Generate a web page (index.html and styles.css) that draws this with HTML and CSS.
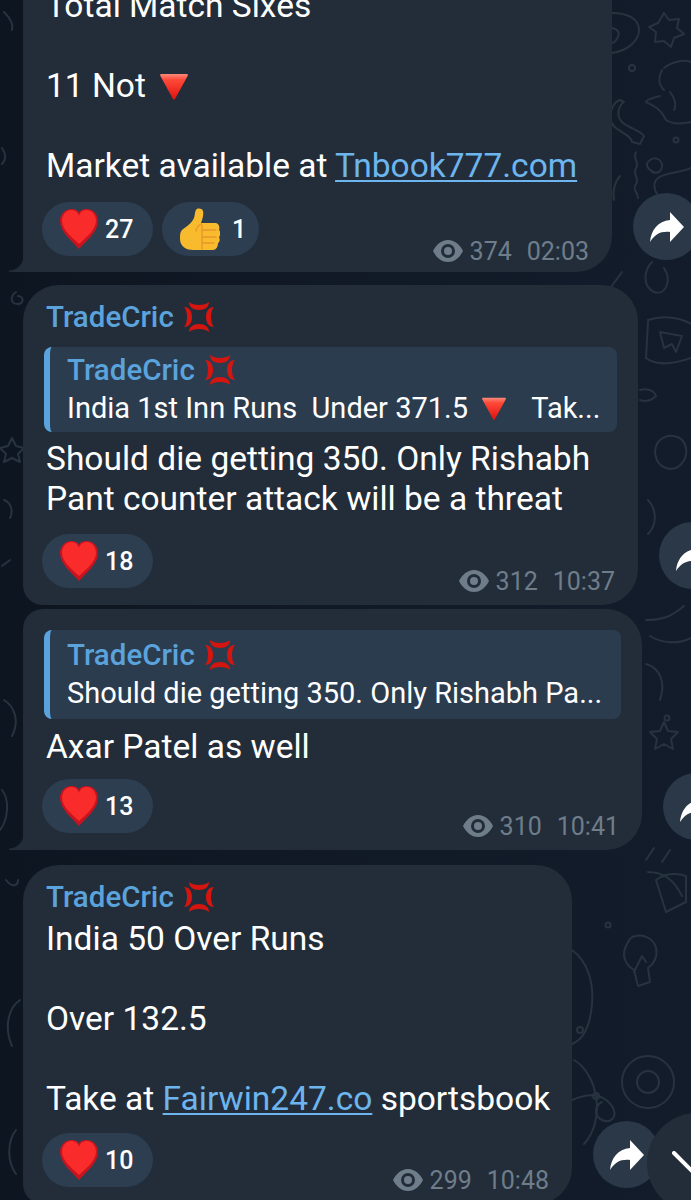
FILE: index.html
```html
<!DOCTYPE html>
<html lang="en">
<head>
    <meta charset="UTF-8">
    <meta name="viewport" content="width=device-width, initial-scale=1.0">
    <title>TradeCric</title>
    <link rel="stylesheet" href="styles.css">
</head>
<body>
    <svg class="sprites" width="0" height="0">
        <defs>
            <linearGradient id="triFill" x1="0" y1="0" x2="0" y2="1">
                <stop offset="0" stop-color="#f98a7c"/>
                <stop offset="0.22" stop-color="#ff4a38"/>
                <stop offset="1" stop-color="#de130f"/>
            </linearGradient>
        </defs>
        <symbol id="heart" viewBox="0 0 38 40">
            <path fill="#c8141f" d="M19 40C12 32 0 23 0 12 0 5 5 0 11 0c4 0 7 1 8 4 1-3 4-4 8-4 6 0 11 5 11 12 0 11-12 20-19 28z"/>
            <path fill="#f92b2b" d="M19 35C13 29 2 21 2 12 2 6 6 1 11 1c4 0 7 2 8 6 1-4 4-6 8-6 5 0 9 5 9 11 0 9-11 17-17 23z"/>
        </symbol>
        <symbol id="thumb" viewBox="0 0 40 42">
            <path fill="#f9bb2e" d="M2 22c4-3 10-7 12-12 1-3 1-7 2-8 1-2 6-2 7 1 1 4-1 9-2 12h14c4 0 5 4 4 7 2 2 2 5 0 7 1 2 1 5-1 6 0 4-2 7-5 7H13C7 42 0 39 0 31c0-4 0-7 2-9z"/>
            <path fill="none" stroke="#e9962c" stroke-width="1.4" stroke-linecap="round" d="M21 16c-3 2-5 4-5 7M23 22h13M23 29h13M23 35h11M22 17v24"/>
        </symbol>
        <symbol id="tri" viewBox="0 0 28 26">
            <path fill="url(#triFill)" d="M1 0h26c1 0 1 1 .6 2L15 25c-.6 1-1.400 1-2 0L.4 2C0 1 0 0 1 0z"/>
        </symbol>
        <symbol id="anger" viewBox="0 0 30 30">
            <g fill="#d5150f">
                <path id="angerMark" d="M5 0c4 4 16 4 20 0 0 5-4 8-10 8S5 5 5 0z"/>
                <use href="#angerMark" transform="rotate(90 15 15)"/>
                <use href="#angerMark" transform="rotate(180 15 15)"/>
                <use href="#angerMark" transform="rotate(270 15 15)"/>
            </g>
        </symbol>
        <symbol id="eye" viewBox="0 0 30 22">
            <path fill="#6f7d8b" fill-rule="evenodd" d="M15 0c7 0 12 5 15 11-3 6-8 11-15 11S3 17 0 11C3 5 8 0 15 0zm0 4a7 7 0 100 14 7 7 0 000-14z"/>
            <circle fill="#6f7d8b" cx="15" cy="11" r="4"/>
        </symbol>
        <symbol id="share" viewBox="0 0 34 30">
            <path fill="#fff" d="M20 0l14 15-14 15V20C11 19 5 22 0 30 1 18 8 9 20 8z"/>
        </symbol>
    </svg>

    <svg class="doodles" viewBox="0 0 691 1200" fill="none" stroke="#27333f" stroke-width="2" stroke-linecap="round" stroke-linejoin="round">
        <path d="M664 13l5 7 10-1-2 9 7 6-10 4-3 9-7-6-9 1 1-10-7-5 9-4z"/>
        <path d="M612 13c16 0 27 6 27 17s-12 21-27 23M612 28c6 1 8 5 6 9s-4 6-6 6"/>
        <circle cx="632" cy="68" r="3"/>
        <path d="M664 68c10-8 22-8 27-6M662 70c-4 8-4 14 2 20M660 96c-8 2-14 4-14 6 8 4 14 6 20 18 6 4 16 4 25 2M670 92c6 8 6 14 4 18"/>
        <path d="M624 102c-6 4-8 14-2 20 6 6 18 8 22 14l-4 8-8-2c-2-10-20-10-22-24 0-8 4-16 10-18z"/>
        <circle cx="676" cy="140" r="2.500"/>
        <path d="M636 152c-4 6 4 10 0 16s4 10 0 16 2 8 2 14"/>
        <path d="M654 172c-6-2-10-8-4-12s12 0 12 6-6 8-10 6"/>
        <path d="M691 168c-12 6-32 4-36 14-2 6 2 12 2 12"/>
        <path d="M620 176c-4 4-8 14-6 24"/>
        <path d="M622 272l-16 22M652 262c-8 8-10 24 2 30 12 4 18-12 10-24"/>
        <path d="M16 292c-6 4-6 12 2 12 6 0 6-8 0-8"/>
        <path d="M4 12c6 6 10 12 8 18M2 148c4 6 4 12 0 16"/>
        <path d="M648 320c12-4 30-4 43 4M648 322l-2 36c10 8 28 6 45 0"/>
        <path d="M660 332l22 4-6 16-4-8-8 4z"/>
        <path d="M640 390c6-2 14 0 16 6-4 4-10 6-16 4"/>
        <path d="M660 440c10-8 24-4 26 8s-8 24-20 20-14-20-6-28zM648 500c8 8 10 24 0 34"/>
        <path d="M12 438l4 8 8 2-6 6 2 8-8-4-8 4 2-8-6-6 8-2z"/>
        <path d="M4 500c6 2 10 10 6 18M10 560l-8 6"/>
        <path d="M646 620c14 0 24-2 38-14M650 636c12 8 30 8 41 2"/>
        <path d="M646 664c14 4 20 18 14 36"/>
        <circle cx="667" cy="718" r="2.500"/>
        <path d="M664 722l4 9 10 1-7 7 2 10-9-5-9 5 2-10-7-7 10-1z"/>
        <path d="M4 700c10 6 16 20 8 36M2 790c8 10 6 30-2 40"/>
        <path d="M648 872c16 0 26 8 34 24M654 848l-8 12M670 850l-8 12"/>
        <path d="M656 880c8-6 20-8 30-4v26l-20 10z"/>
        <path d="M636 936c10-2 18 4 20 12s-2 16-8 20l2 14-12 4-4-16c-10-6-12-16-8-24s6-10 10-10zM634 972l8-16 4 6"/>
        <circle cx="608" cy="925" r="2.500"/>
        <circle cx="648" cy="1082" r="26"/>
        <circle cx="648" cy="1082" r="11"/>
        <path d="M572 950c14 10 22 30 20 54s-10 36-20 40M574 1060c24 14 32 60 10 84"/>
        <path d="M664 1130c-6 12 0 40 16 62M691 1120c-14 0-30 10-36 24"/>
        <circle cx="580" cy="1030" r="3"/>
        <circle cx="596" cy="1096" r="3"/>
        <path d="M20 1000c-12 8-16 28-8 46M6 880c6 8 12 6 12 0M16 1130c-8 10-10 30 0 44"/>
        <path d="M572 1100c14-6 30-8 40 6 6 10 0 18-10 14-8-4-8-14 0-18"/>
    </svg>

    <main class="chat">
        <div class="row row-first">
            <article class="bubble bubble-first has-tail">
                <p class="msg">Total Match Sixes<br><br>11 Not <svg class="tri"><use href="#tri"/></svg><br><br>Market available at <a class="link" href="#">Tnbook777.com</a></p>
                <div class="foot foot-first">
                    <div class="reactions">
                        <span class="pill"><svg class="heart"><use href="#heart"/></svg><span class="count">27</span></span>
                        <span class="pill pill-thumb"><svg class="thumb"><use href="#thumb"/></svg><span class="count">1</span></span>
                    </div>
                    <div class="meta"><svg class="eye"><use href="#eye"/></svg><span>374</span><span class="time">02:03</span></div>
                </div>
            </article>
            <button class="share"><svg class="share-icon"><use href="#share"/></svg></button>
        </div>

        <div class="row row-second">
            <article class="bubble bubble-second">
                <div class="name">TradeCric <svg class="anger"><use href="#anger"/></svg></div>
                <blockquote class="quote">
                    <div class="quote-name">TradeCric <svg class="anger"><use href="#anger"/></svg></div>
                    <div class="quote-text">India 1st Inn Runs  Under 371.5 <svg class="tri tri-small"><use href="#tri"/></svg>   Tak...</div>
                </blockquote>
                <p class="msg msg-after-quote">Should die getting 350. Only Rishabh Pant counter attack will be a threat</p>
                <div class="foot">
                    <div class="reactions">
                        <span class="pill"><svg class="heart"><use href="#heart"/></svg><span class="count">18</span></span>
                    </div>
                    <div class="meta"><svg class="eye"><use href="#eye"/></svg><span>312</span><span class="time">10:37</span></div>
                </div>
            </article>
            <button class="share"><svg class="share-icon"><use href="#share"/></svg></button>
        </div>

        <div class="row row-third">
            <article class="bubble bubble-third has-tail">
                <blockquote class="quote quote-tall">
                    <div class="quote-name">TradeCric <svg class="anger"><use href="#anger"/></svg></div>
                    <div class="quote-text">Should die getting 350. Only Rishabh Pa...</div>
                </blockquote>
                <p class="msg msg-after-quote msg-short">Axar Patel as well</p>
                <div class="foot foot-short">
                    <div class="reactions">
                        <span class="pill"><svg class="heart"><use href="#heart"/></svg><span class="count">13</span></span>
                    </div>
                    <div class="meta"><svg class="eye"><use href="#eye"/></svg><span>310</span><span class="time">10:41</span></div>
                </div>
            </article>
            <button class="share"><svg class="share-icon"><use href="#share"/></svg></button>
        </div>

        <div class="row row-fourth">
            <article class="bubble bubble-fourth">
                <div class="name name-tight">TradeCric <svg class="anger"><use href="#anger"/></svg></div>
                <p class="msg">India 50 Over Runs<br><br>Over 132.5<br><br>Take at <a class="link" href="#">Fairwin247.co</a> sportsbook</p>
                <div class="foot foot-last">
                    <div class="reactions">
                        <span class="pill"><svg class="heart"><use href="#heart"/></svg><span class="count">10</span></span>
                    </div>
                    <div class="meta"><svg class="eye"><use href="#eye"/></svg><span>299</span><span class="time">10:48</span></div>
                </div>
            </article>
            <button class="share"><svg class="share-icon"><use href="#share"/></svg></button>
        </div>
    </main>

    <button class="scroll-down">
        <svg class="chevron" viewBox="0 0 44 24" fill="none" stroke="#fff" stroke-width="4" stroke-linecap="round"><path d="M2 2l20 20 20-20"/></svg>
    </button>
</body>
</html>
```

FILE: styles.css
```css
html, body { margin: 0; height: 1200px; overflow: hidden; background-color: #111a26; }
body { position: relative; font-family: Roboto, "Liberation Sans", sans-serif; color: #fff; background-image: linear-gradient(90deg, #0d1620, #131c2b); }
p, blockquote { margin: 0; }
.sprites { position: absolute; }
.doodles { position: absolute; top: 0; left: 0; width: 691px; height: 1200px; }

.chat { position: relative; display: flex; flex-direction: column; margin-top: -26px; padding-left: 23px; }
.row { display: flex; align-items: flex-end; }
.row-second { margin-top: 13px; }
.row-third { margin-top: 4px; }
.row-fourth { margin-top: 15px; }

.bubble { position: relative; flex: none; box-sizing: border-box; padding: 12px 21px 17px 21px; background-color: #222d39; border-radius: 36px 36px 36px 20px; }
.bubble-first { width: 589px; padding-bottom: 16px; border-radius: 20px 20px 36px 0; }
.bubble-second { width: 615px; border-radius: 36px 36px 36px 20px; }
.bubble-third { width: 619px; padding-top: 21px; border-radius: 20px 36px 36px 0; }
.bubble-fourth { width: 549px; }
.has-tail::before { content: ""; position: absolute; left: -14px; bottom: 0; width: 14px; height: 16px; background: radial-gradient(circle at 0 0, transparent 14px, #222d39 15px); }

.name { display: flex; align-items: center; height: 40px; padding-left: 2px; margin-bottom: 10px; font-size: 29.5px; font-weight: 500; color: #5ba3dc; white-space: pre; }
.name-tight { margin-bottom: 2px; }
.anger { width: 30px; height: 30px; margin-left: 3px; }

.quote { box-sizing: border-box; height: 85px; padding: 4px 14px 5px 17px; background-color: #2c3c4f; border-left: 6px solid #5ba3dc; border-radius: 8px; }
.quote-tall { height: 89px; padding-top: 6px; }
.quote-name { display: flex; align-items: center; height: 38px; font-size: 29.5px; font-weight: 500; color: #5ba3dc; white-space: pre; }
.quote-text { height: 38px; font-size: 29px; line-height: 38px; white-space: pre; }

.msg { padding-left: 2px; font-size: 33.5px; line-height: 40px; }
.msg-after-quote { margin-top: 7px; }
.msg-short { margin-top: 8px; }
.link { color: #6db5ee; text-decoration: underline; text-underline-offset: 3px; text-decoration-thickness: 2px; }
.tri { width: 28px; height: 26px; margin-left: 6px; vertical-align: -3px; }
.tri-small { width: 24px; height: 24px; margin: 0 4px 0 7px; vertical-align: -3px; }

.foot { display: flex; align-items: flex-end; justify-content: space-between; margin-top: 15px; }
.foot-first { margin-top: 16px; }
.foot-first .meta { margin-bottom: -10px; }
.foot-short { margin-top: 12px; }
.foot-last { margin-top: 14px; }
.reactions { display: flex; gap: 9px; margin-left: -2px; }
.pill { display: flex; align-items: center; box-sizing: border-box; width: 111px; height: 54px; padding-left: 18px; background-color: #2d3e51; border-radius: 27px; }
.pill-thumb { width: 97px; }
.heart { width: 38px; height: 40px; }
.thumb { width: 40px; height: 42px; }
.count { margin-left: 7px; font-size: 25px; font-weight: 500; }
.pill-thumb .count { margin-left: 12px; }

.meta { display: flex; align-items: center; height: 30px; margin: 0 2px -8px 0; font-size: 25px; color: #6f7d8b; }
.eye { width: 30px; height: 22px; margin-right: 7px; }
.time { margin-left: 15px; }

.share { flex: none; display: flex; align-items: center; justify-content: center; width: 67px; height: 67px; padding: 0; margin: 0 0 12px 21px; background-color: #2b3847; border: none; border-radius: 50%; }
.share-icon { width: 34px; height: 30px; }
.row-second .share { margin-bottom: 16px; }
.row-third .share { margin-bottom: 10px; }
.row-fourth .share { margin-bottom: 16px; }

.scroll-down { position: absolute; left: 647px; top: 1113px; width: 100px; height: 100px; padding: 0; background-color: #222d39; border: none; border-radius: 50%; }
.chevron { position: absolute; left: 25px; top: 38px; width: 44px; height: 24px; }
```
